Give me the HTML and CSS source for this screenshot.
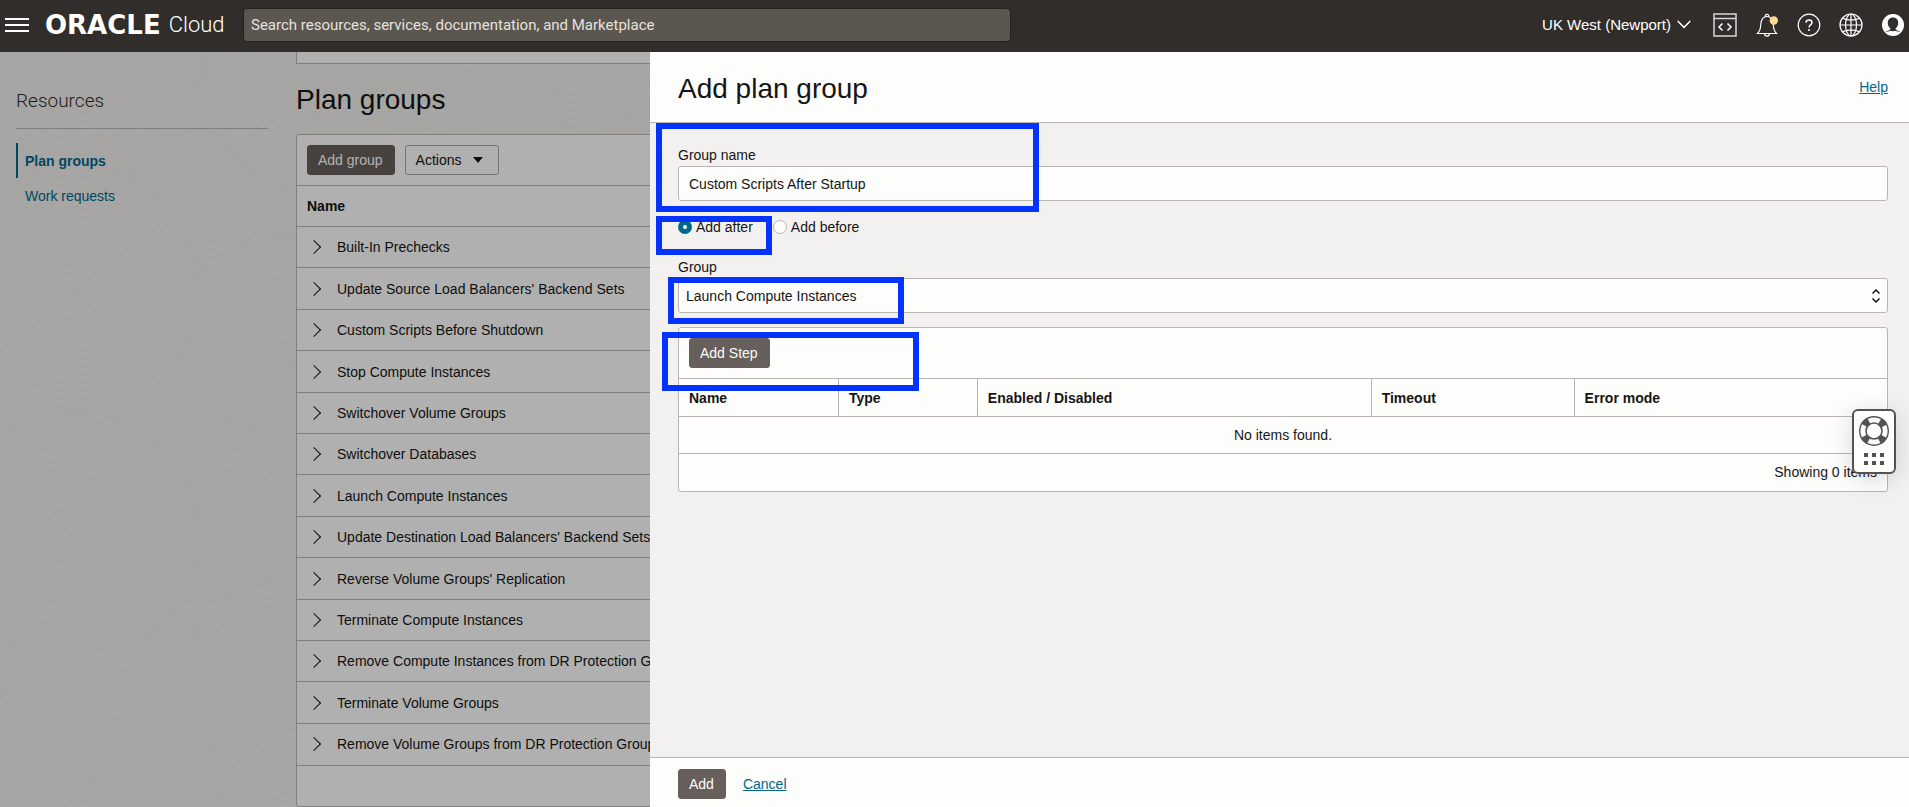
FILE: index.html
```html
<!DOCTYPE html>
<html lang="en">
<head>
<meta charset="utf-8">
<title>Plan groups - Oracle Cloud</title>
<link rel="stylesheet" href="styles.css">
</head>
<body>
<header class="topbar">
  <button class="icon-btn menu" aria-label="Menu">
    <svg width="24" height="16" viewBox="0 0 24 16"><path d="M0 2h24M0 8h24M0 14h24" stroke="#fff" stroke-width="2"/></svg>
  </button>
  <a class="logo" href="#"><span class="logo-name">ORACLE</span><span class="logo-product">Cloud</span></a>
  <input class="search" type="search" aria-label="Search" placeholder="Search resources, services, documentation, and Marketplace">
  <div class="tools">
    <button class="region">UK West (Newport)
      <svg width="14" height="9" viewBox="0 0 14 9"><path d="M.7 1 7 7.400 13.300 1" fill="none" stroke="#fff" stroke-width="1.500"/></svg>
    </button>
    <button class="icon-btn" aria-label="Developer tools">
      <svg width="24" height="24" viewBox="0 0 24 24" fill="none" stroke="#d8d7d5" stroke-width="1.500"><path d="M1 1h22v22H1zM1 5.500h22"/><path d="m9.500 10.500-3.500 3.500 3.500 3.500M14.500 10.500l3.500 3.500-3.500 3.500" stroke="#fff"/></svg>
    </button>
    <button class="icon-btn" aria-label="Notifications">
      <svg width="24" height="24" viewBox="0 0 24 24" fill="none" stroke="#fff" stroke-width="1.200"><path d="M10.200 3.200a1.800 1.800 0 1 1 3.600 0M2.500 20.500h19c-2.500-2.500-3-4-3.200-8.500C18 6.500 15.800 3.500 12 3.500S6 6.500 5.700 12c-.2 4.500-.7 6-3.200 8.500zM9.600 20.700a2.400 2.400 0 0 0 4.800 0"/><circle cx="18.800" cy="7.500" r="4.200" fill="#fbdb94" stroke="none"/></svg>
    </button>
    <button class="icon-btn" aria-label="Help">
      <svg width="24" height="24" viewBox="0 0 24 24" fill="none" stroke="#fff" stroke-width="1.200"><circle cx="12" cy="12" r="10.800"/><path d="M9 9.700C9 7.900 10.200 7 12 7s3 1 3 2.600c0 2.300-3 2.300-3 4.900" stroke-width="1.500"/><circle cx="12" cy="17" r="1" fill="#fff" stroke="none"/></svg>
    </button>
    <button class="icon-btn" aria-label="Language">
      <svg width="24" height="24" viewBox="0 0 24 24" fill="none" stroke="#fff" stroke-width="1.200"><circle cx="12" cy="12" r="11"/><ellipse cx="12" cy="12" rx="5.500" ry="11"/><path d="M12 1v22M1 12h22M3.500 5.200c5 2.200 12 2.200 17 0M3.500 18.800c5-2.200 12-2.200 17 0"/></svg>
    </button>
    <button class="icon-btn" aria-label="Profile">
      <svg width="24" height="24" viewBox="0 0 24 24"><circle cx="12" cy="12" r="11" fill="#fff"/><path d="M12 4.500c-3.200 0-5.200 2.200-5.200 5.200 0 2.700 1.200 4.800 2.700 5.800-.3 1.500-2 2-3.500 2.600l-1.500 1.200C6.300 18.500 8 18.600 9.500 17.800c1.600.6 3.400.6 5 0 1.500.8 3.200.7 5 1.500L18 18.100c-1.500-.6-3.200-1.100-3.500-2.600 1.500-1 2.700-3.100 2.700-5.800 0-3-2-5.200-5.200-5.200z" fill="#312d2a"/></svg>
    </button>
  </div>
</header>

<div class="page">
  <svg class="waves" width="100%" height="100%" aria-hidden="true">
    <defs>
      <radialGradient id="ring" gradientUnits="userSpaceOnUse" cx="0" cy="0" r="8" spreadMethod="repeat">
        <stop offset="0" stop-color="#f0efed"/><stop offset=".5" stop-color="#ecebe9"/><stop offset="1" stop-color="#f0efed"/>
      </radialGradient>
      <circle id="disc" r="126" fill="url(#ring)"/>
    </defs>
    <use href="#disc" x="200" y="130"/><use href="#disc" x="330" y="20"/><use href="#disc" x="560" y="-40"/>
    <use href="#disc" x="440" y="90"/><use href="#disc" x="290" y="310"/><use href="#disc" x="73" y="10"/>
    <use href="#disc" x="73" y="240"/><use href="#disc" x="200" y="490"/><use href="#disc" x="73" y="484"/>
    <use href="#disc" x="300" y="650"/><use href="#disc" x="90" y="730"/>
  </svg>
  <aside class="side">
    <h2 class="side-title">Resources</h2>
    <nav class="side-nav">
      <a class="side-link active" href="#">Plan groups</a>
      <a class="side-link" href="#">Work requests</a>
    </nav>
  </aside>
  <main class="main">
    <div class="card-end"></div>
    <h1 class="title">Plan groups</h1>
    <section class="panel">
      <div class="toolbar">
        <button class="btn primary">Add group</button>
        <button class="btn outline">Actions <svg width="10" height="6" viewBox="0 0 10 6"><path d="M0 0h10L5 6z" fill="#161513"/></svg></button>
      </div>
      <table class="groups">
        <thead><tr><th>Name</th></tr></thead>
        <tbody>
          <tr><td><button class="row-toggle">Built-In Prechecks</button></td></tr>
          <tr><td><button class="row-toggle">Update Source Load Balancers' Backend Sets</button></td></tr>
          <tr><td><button class="row-toggle">Custom Scripts Before Shutdown</button></td></tr>
          <tr><td><button class="row-toggle">Stop Compute Instances</button></td></tr>
          <tr><td><button class="row-toggle">Switchover Volume Groups</button></td></tr>
          <tr><td><button class="row-toggle">Switchover Databases</button></td></tr>
          <tr><td><button class="row-toggle">Launch Compute Instances</button></td></tr>
          <tr><td><button class="row-toggle">Update Destination Load Balancers' Backend Sets</button></td></tr>
          <tr><td><button class="row-toggle">Reverse Volume Groups' Replication</button></td></tr>
          <tr><td><button class="row-toggle">Terminate Compute Instances</button></td></tr>
          <tr><td><button class="row-toggle">Remove Compute Instances from DR Protection Group</button></td></tr>
          <tr><td><button class="row-toggle">Terminate Volume Groups</button></td></tr>
          <tr><td><button class="row-toggle">Remove Volume Groups from DR Protection Group</button></td></tr>
        </tbody>
      </table>
      <div class="panel-foot"></div>
    </section>
  </main>
  <div class="backdrop"></div>

  <form class="drawer">
    <div class="drawer-head">
      <h1 class="title">Add plan group</h1>
      <a class="link" href="#">Help</a>
    </div>
    <div class="drawer-body">
      <label class="label" for="group-name">Group name</label>
      <input class="field" id="group-name" type="text" value="Custom Scripts After Startup">
      <div class="radios">
        <label class="radio"><input type="radio" name="pos" checked>Add after</label>
        <label class="radio"><input type="radio" name="pos">Add before</label>
      </div>
      <label class="label" for="group">Group</label>
      <div class="select-wrap">
        <select class="field select" id="group"><option>Launch Compute Instances</option></select>
        <svg class="select-icon" width="8" height="14" viewBox="0 0 8 14"><path d="M.5 4.500 4 1l3.500 3.500M.5 9.500 4 13l3.500-3.500" fill="none" stroke="#161513" stroke-width="1.500"/></svg>
      </div>
      <section class="panel steps">
        <div class="toolbar"><button class="btn primary" type="button">Add Step</button></div>
        <table class="step-table">
          <colgroup><col class="c-name"><col class="c-type"><col class="c-enabled"><col class="c-timeout"><col></colgroup>
          <thead><tr><th>Name</th><th>Type</th><th>Enabled / Disabled</th><th>Timeout</th><th>Error mode</th></tr></thead>
          <tbody><tr><td class="empty" colspan="5">No items found.</td></tr></tbody>
          <tfoot><tr><td class="count" colspan="5">Showing 0 items</td></tr></tfoot>
        </table>
      </section>
      <span class="mark mark-name"></span>
      <span class="mark mark-after"></span>
      <span class="mark mark-group"></span>
      <span class="mark mark-step"></span>
    </div>
    <div class="drawer-foot">
      <button class="btn primary" type="button">Add</button>
      <a class="link" href="#">Cancel</a>
    </div>
  </form>

  <button class="support" aria-label="Support">
    <svg width="30" height="30" viewBox="0 0 30 30" fill="none" stroke="#57524e"><circle cx="15" cy="15" r="11.500" stroke-width="7" stroke-dasharray="6.500 11.564" stroke-dashoffset="-5.782"/><circle cx="15" cy="15" r="14.300" stroke-width="1.400"/><circle cx="15" cy="15" r="8" stroke-width="1.600"/></svg>
    <svg width="20" height="12" viewBox="0 0 20 12"><path d="M0 0h4v4H0zM8 0h4v4H8zM16 0h4v4h-4zM0 8h4v4H0zM8 8h4v4H8zM16 8h4v4h-4z" fill="#57524e"/></svg>
  </button>
</div>
</body>
</html>
```

FILE: styles.css
```css
* { box-sizing: border-box; }
body {
  margin: 0;
  height: 100vh;
  display: flex;
  flex-direction: column;
  overflow: hidden;
  font: 14px/20px "Liberation Sans", Arial, sans-serif;
  color: #161513;
}
button, input, select { font: inherit; color: inherit; }
button { cursor: pointer; }
h1, h2 { margin: 0; font-weight: 400; }

/* Top bar */
.topbar {
  flex: none;
  height: 52px;
  padding: 0 4px 3px 5px;
  display: flex;
  align-items: center;
  background: #312d2a;
  color: #fff;
}
.icon-btn { display: flex; padding: 0; border: 0; background: none; }
.logo {
  display: flex;
  align-items: center;
  gap: 8px;
  width: 198px;
  margin-left: 16px;
  color: #fff;
  text-decoration: none;
}
.logo-name { font: bold 26px/28px "DejaVu Sans", sans-serif; }
.logo-product { font: 300 22px/28px Roboto, sans-serif; }
.search {
  flex: 0 1 768px;
  height: 34px;
  padding: 0 7px;
  border: 1px solid #25211f;
  border-radius: 4px;
  background: #5b564f;
  font: 15px/20px Roboto, sans-serif;
  color: #fff;
}
.search::placeholder { color: #e4e2df; }
.tools { display: flex; align-items: center; gap: 18px; margin-left: auto; }
.region {
  display: flex;
  align-items: center;
  gap: 6px;
  padding: 0;
  border: 0;
  margin-right: 4px;
  background: none;
  font: 15px/20px "Liberation Sans", sans-serif;
}

/* Page behind the drawer */
.page {
  position: relative;
  flex: 1;
  min-height: 0;
  display: flex;
  gap: 28px;
  padding: 0 16px;
  overflow: hidden;
  background: #eeedeb;
}
.waves, .backdrop { position: absolute; inset: 0; }
.backdrop { background: rgba(0, 0, 0, .3); }
.side { position: relative; flex: none; width: 252px; padding-top: 36px; }
.side-title {
  padding-bottom: 14px;
  border-bottom: 1px solid #bab5b0;
  font: 300 19px/26px Roboto, sans-serif;
  color: #312d2a;
}
.side-nav { display: flex; flex-direction: column; padding-top: 14px; }
.side-link {
  padding: 8px 7px 7px;
  border-left: 2px solid transparent;
  color: #00688c;
  text-decoration: none;
}
.side-link.active { border-color: #00688c; font-weight: 700; }
.main { position: relative; flex: 1; min-width: 0; }
.card-end { height: 12px; border: 1px solid #bab5b0; border-top: 0; background: #fdfdfc; }
.title { font-size: 28px; line-height: 36px; }
.main .title { padding: 18px 0 16px; }
.panel { border: 1px solid #bab5b0; border-radius: 3px; background: #fdfdfc; }
.toolbar { display: flex; gap: 10px; padding: 10px; }
.btn {
  display: flex;
  align-items: center;
  gap: 11px;
  height: 30px;
  padding: 0 11px 0 10px;
  border: 1px solid #665f5b;
  border-radius: 3px;
}
.btn.primary { background: #665f5b; color: #fdfdfc; }
.btn.outline { padding-right: 15px; border-color: #aaa6a1; background: none; }
table { width: 100%; border-collapse: collapse; }
th, td { height: 41px; padding: 0 10px; border-top: 1px solid #bab5b0; text-align: left; }
.groups tbody tr:nth-child(5n+2) td, .groups tbody tr:nth-child(5n+4) td { height: 42px; }
.row-toggle {
  display: flex;
  align-items: center;
  gap: 18px;
  padding: 0 2px;
  border: 0;
  background: none;
}
.row-toggle::before {
  content: "";
  width: 9px;
  height: 9px;
  border: solid #161513;
  border-width: 1px 1px 0 0;
  transform: rotate(45deg);
}
.panel-foot { height: 41px; border-top: 1px solid #bab5b0; }

/* Drawer */
.drawer {
  position: absolute;
  inset: 0 0 0 650px;
  display: flex;
  flex-direction: column;
  background: #f3f1f0;
}
.drawer-head, .drawer-foot { flex: none; display: flex; background: #fdfdfc; padding: 0 21px 0 28px; }
.drawer-head {
  justify-content: space-between;
  align-items: center;
  height: 71px;
  border-bottom: 1px solid #bab5b0;
}
.drawer-head .title { padding-top: 4px; }
.drawer-foot { align-items: center; gap: 17px; height: 50px; padding-top: 3px; border-top: 1px solid #bab5b0; }
.link { color: #00688c; text-decoration: underline; }
.drawer-body { position: relative; flex: 1; padding: 21px 21px 0 28px; }
.label { display: block; line-height: 22px; }
.field {
  display: block;
  width: 100%;
  height: 35px;
  padding: 0 10px;
  border: 1px solid #bab5b0;
  border-radius: 3px;
  background: #fdfdfc;
}
.radios { display: flex; gap: 20px; padding: 16px 0 19px; }
.radio { display: flex; align-items: center; gap: 4px; }
.radio input {
  appearance: none;
  width: 14px;
  height: 14px;
  margin: 0;
  border: 1px solid #bab5b0;
  border-radius: 50%;
  background: #fdfdfc;
}
.radio input:checked { border: 5px solid #00688c; }
.select-wrap { position: relative; }
.select { appearance: none; padding: 0 7px; }
.select-icon { position: absolute; right: 8px; top: 11px; }
.steps { margin-top: 14px; }
.step-table { table-layout: fixed; }
.step-table th { height: 38px; }
.step-table td { height: 37px; }
.step-table th + th { border-left: 1px solid #bab5b0; }
.c-name { width: 13.2%; }
.c-type { width: 11.5%; }
.c-enabled { width: 32.6%; }
.c-timeout { width: 16.8%; }
.step-table .empty { text-align: center; }
.step-table .count { text-align: right; }

/* Highlight frames drawn over the form */
.mark { position: absolute; border: 6px solid #0433ff; pointer-events: none; }
.mark-name { left: 6px; top: 0; width: 383px; height: 89px; }
.mark-after { left: 6px; top: 93px; width: 116px; height: 39px; }
.mark-group { left: 18px; top: 154px; width: 236px; height: 47px; }
.mark-step { left: 12px; top: 209px; width: 257px; height: 59px; }

.support {
  position: absolute;
  right: 13px;
  top: 357px;
  display: flex;
  flex-direction: column;
  align-items: center;
  gap: 7px;
  width: 44px;
  padding: 5px 0 7px;
  border: 2px solid #57524e;
  border-radius: 6px;
  background: #fdfdfc;
  box-shadow: 0 4px 24px rgba(0, 0, 0, .15);
}
```
